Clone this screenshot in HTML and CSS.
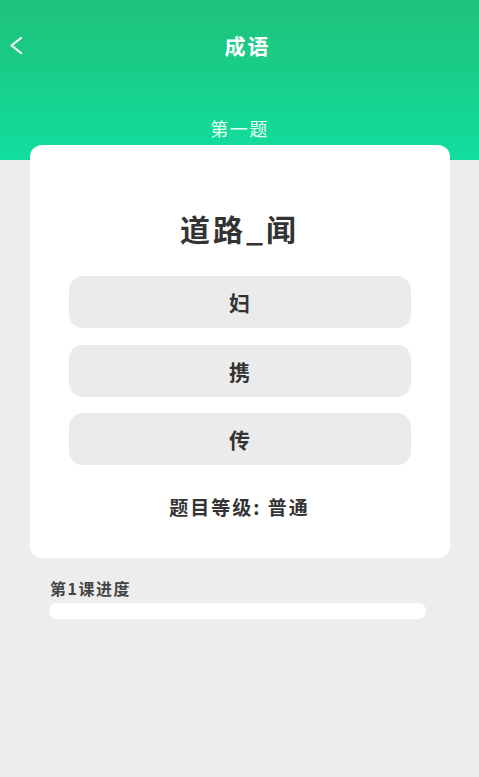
FILE: index.html
```html
<!DOCTYPE html>
<html lang="zh">
<head>
<meta charset="utf-8">
<title>成语</title>
<link rel="stylesheet" href="styles.css">
</head>
<body>
<header class="header">
  <div class="topbar">
    <span class="back">
      <svg width="14" height="20" viewBox="0 0 14 20"><path d="M12 2 L2.5 9.5 L12 17" fill="none" stroke="#fff" stroke-width="2.2" stroke-linecap="round" stroke-linejoin="round"/></svg>
    </span>
    <h1 class="title">成语</h1>
  </div>
  <div class="qnum">第一题</div>
</header>
<main class="card">
  <div class="question">道路_闻</div>
  <div class="options">
    <div class="option">妇</div>
    <div class="option">携</div>
    <div class="option">传</div>
  </div>
  <div class="level">题目等级: 普通</div>
</main>
<section class="progress">
  <div class="progress-label">第1课进度</div>
  <div class="progress-bar"></div>
</section>
</body>
</html>
```
FILE: styles.css
```css
* { box-sizing: border-box; }
html, body { margin: 0; padding: 0; }
body {
  background: #ededed;
  font-family: "Noto Sans CJK SC", "Noto Sans", sans-serif;
  color: #333;
  width: 479px;
  min-height: 777px;
}
.header {
  height: 160px;
  background: linear-gradient(180deg, #1fc279 0%, #18cf8b 50%, #11de9f 100%);
  color: #fff;
}
.topbar {
  position: relative;
  height: 90px;
  padding-left: 16px;
  display: flex;
  align-items: center;
  justify-content: center;
}
.back {
  position: absolute;
  left: 9px;
  top: 36px;
  display: flex;
}
.title {
  margin: 0;
  font-size: 21px;
  font-weight: 700;
  line-height: 24px;
  letter-spacing: 2px;
}
.qnum {
  text-align: center;
  margin-top: 28px;
  font-size: 18px;
  line-height: 20px;
  letter-spacing: 1.5px;
  color: #e6fff4;
}
.card {
  width: 420px;
  margin: -15px auto 0;
  background: #fff;
  border-radius: 12px;
  padding: 63px 39px 39px;
  display: flex;
  flex-direction: column;
}
.question {
  text-align: center;
  font-size: 30px;
  font-weight: 700;
  line-height: 40px;
  letter-spacing: 3px;
  color: #333;
}
.options {
  margin-top: 28px;
  display: flex;
  flex-direction: column;
  gap: 16.5px;
}
.option {
  height: 52px;
  border-radius: 14px;
  background: #ebebeb;
  display: flex;
  align-items: center;
  justify-content: center;
  font-size: 21px;
  font-weight: 700;
  color: #333;
}
.level {
  margin-top: 30px;
  text-align: center;
  font-size: 19px;
  font-weight: 700;
  line-height: 24px;
  letter-spacing: 2px;
  color: #333;
}
.progress {
  padding: 20px 53px 0 49px;
}
.progress-label {
  padding-left: 1px;
  font-size: 16px;
  font-weight: 700;
  line-height: 20px;
  letter-spacing: 1.5px;
  color: #444;
}
.progress-bar {
  margin-top: 5px;
  height: 16px;
  border-radius: 8px;
  background: #fff;
}
```
